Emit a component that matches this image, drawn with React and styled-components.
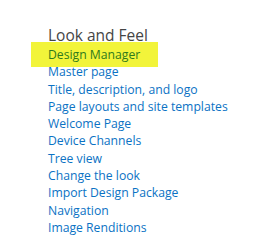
import styled, { createGlobalStyle } from 'styled-components';

const GlobalStyle = createGlobalStyle`
  body {
    margin: 0;
    background: #fff;
    font-family: "Open Sans", "Noto Sans", sans-serif;
  }
`;

const Panel = styled.div`
  padding: 25px 0 0 48px;
  width: 269px;
  height: 250px;
  box-sizing: border-box;
`;

const Heading = styled.h3`
  margin: 0;
  font-weight: 400;
  font-size: 15.5px;
  line-height: 20px;
  color: #454545;
`;

const LinkList = styled.ul`
  list-style: none;
  margin: 1px 0 0;
  padding: 0;
`;

const Item = styled.li`
  font-size: 12.2px;
  line-height: 17.3px;
  height: 17.3px;
`;

const Link = styled.a`
  color: ${(p) => (p.$marked ? '#2f7a1c' : '#0b72c4')};
  text-decoration: none;
  white-space: nowrap;
  background: ${(p) => (p.$marked ? '#f2f43a' : 'transparent')};
  padding: ${(p) => (p.$marked ? '4px 18px 4px 17px' : '0')};
  margin-left: ${(p) => (p.$marked ? '-17px' : '0')};
`;

const links = [
  'Design Manager',
  'Master page',
  'Title, description, and logo',
  'Page layouts and site templates',
  'Welcome Page',
  'Device Channels',
  'Tree view',
  'Change the look',
  'Import Design Package',
  'Navigation',
  'Image Renditions',
];

export default function App() {
  return (
    <>
      <GlobalStyle />
      <Panel>
        <Heading>Look and Feel</Heading>
        <LinkList>
          {links.map((label, i) => (
            <Item key={label}>
              <Link href="#" $marked={i === 0}>{label}</Link>
            </Item>
          ))}
        </LinkList>
      </Panel>
    </>
  );
}
